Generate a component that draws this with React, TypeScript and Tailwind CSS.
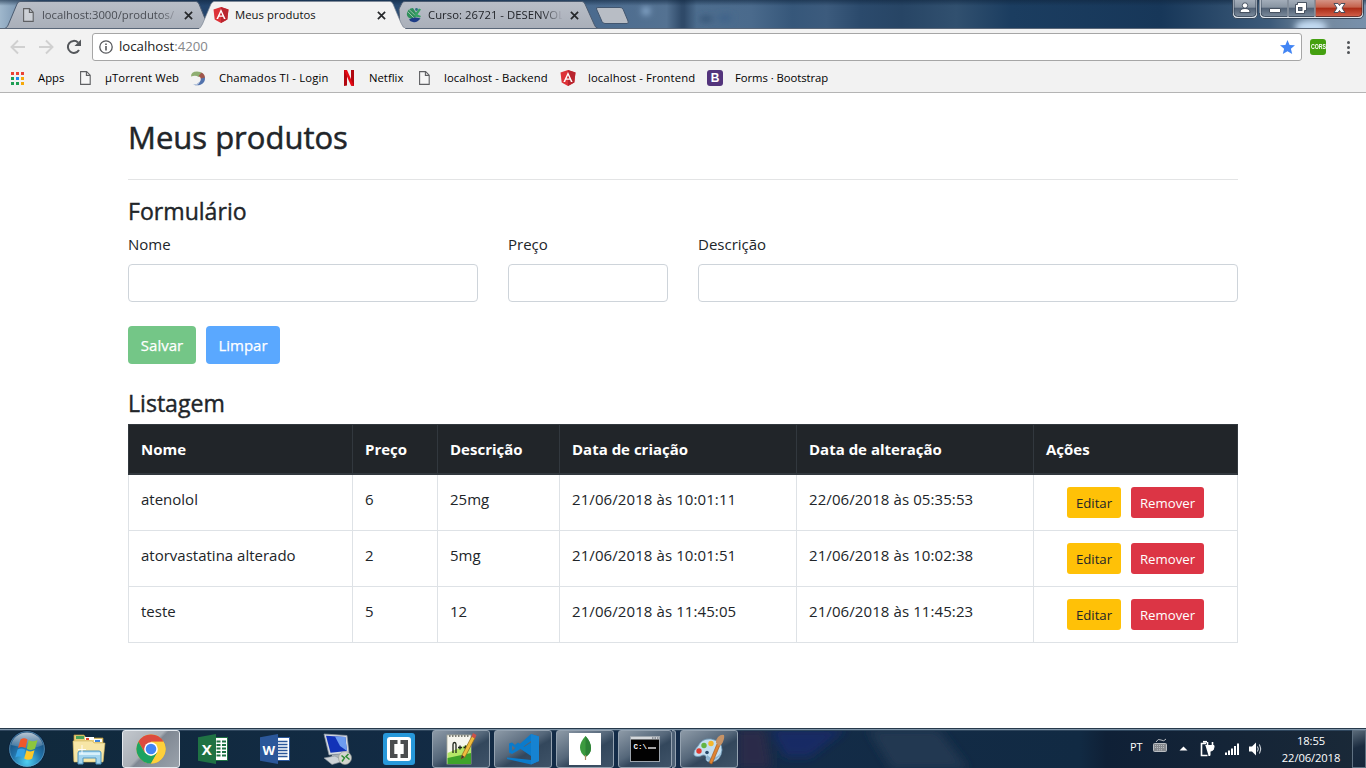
import React from "react";

type Product = { name: string; price: string; description: string; created: string; updated: string };

const products: Product[] = [
  { name: "atenolol", price: "6", description: "25mg", created: "21/06/2018 às 10:01:11", updated: "22/06/2018 às 05:35:53" },
  { name: "atorvastatina alterado", price: "2", description: "5mg", created: "21/06/2018 às 10:01:51", updated: "21/06/2018 às 10:02:38" },
  { name: "teste", price: "5", description: "12", created: "21/06/2018 às 11:45:05", updated: "21/06/2018 às 11:45:23" },
];

/* ---------- icons ---------- */

function FileIcon() {
  return (
    <svg width="11" height="14" viewBox="0 0 11 14" className="block shrink-0" fill="none" stroke="#5f6063" strokeWidth="1.1">
      <path d="M.6 .6H6.6L10.2 4.2V13.4H.6Z" fill="#fff" fillOpacity=".35" />
      <path d="M6.4 .8V4.4H10" />
    </svg>
  );
}

function AngularIcon() {
  return (
    <svg width="16" height="16" viewBox="0 0 16 16" className="block shrink-0">
      <path d="M8 0L15.5 2.6L14.3 12.5L8 16L1.7 12.5L.5 2.6Z" fill="#dd3238" />
      <path d="M8 0L15.5 2.6L14.3 12.5L8 16Z" fill="#b9252f" />
      <path d="M8 2L3.4 12.1H5.1L6 9.8H10L10.9 12.1H12.6ZM8 5.2L9.4 8.4H6.6Z" fill="#fff" fillRule="evenodd" />
    </svg>
  );
}

function CloseIcon() {
  return (
    <svg width="9" height="9" viewBox="0 0 9 9" className="block">
      <path d="M.9 .9L8.1 8.1M8.1 .9L.9 8.1" stroke="#26282b" strokeWidth="1.7" />
    </svg>
  );
}

function CourseIcon() {
  return (
    <svg width="16" height="16" viewBox="0 0 16 16" className="block shrink-0">
      <path d="M.8 7Q1.500 1.500 7 1L12 9L6 12Q.800 11 .800 7Z" fill="#2f8f5b" />
      <path d="M2.500 2L12 11M1.500 4.500L9 12" stroke="#a9c3b6" strokeWidth=".9" />
      <path d="M8.500 7.500L13 1.500L15 2.500L11.500 7.500L15 9L14 10.500L9 9.500Z" fill="#36a263" />
      <path d="M3 12.500Q8 9 14.500 11.500Q11 16 7 15Q4 14.500 3 12.500Z" fill="#1d3c86" />
      <circle cx="10.500" cy="2.500" r="1.400" fill="#2c6f83" />
    </svg>
  );
}

function SwirlIcon() {
  return (
    <svg width="15" height="15" viewBox="0 0 15 15" className="block shrink-0">
      <path d="M0 5.500Q0 .500 6 .500Q10 .500 11.500 2.500L7.500 6Q5 4 0 5.500Z" fill="#8fae72" />
      <path d="M10.500 1.500Q14 3 14 7L10 8.500Q10 6 7.500 5Z" fill="#a0564b" />
      <path d="M14 6.500Q14.500 12 9 14Q6 14.800 3 13.800Q9.500 13 10 7.500Z" fill="#5373ad" />
      <path d="M1.500 13Q6 14 8.500 10.500Q8 14.500 4 14.200Z" fill="#b9c7de" />
    </svg>
  );
}

/* ---------- browser chrome ---------- */

function TabStrip() {
  return (
    <div className="relative h-[29px] w-full shrink-0 overflow-hidden">
      <svg width="1366" height="29" viewBox="0 0 1366 29" className="absolute inset-0">
        <defs>
          <linearGradient id="aero" x1="0" x2="1366" gradientUnits="userSpaceOnUse">
            <stop offset="0" stopColor="#9fb7cc" />
            <stop offset=".012" stopColor="#7f9ab5" />
            <stop offset=".03" stopColor="#44648a" />
            <stop offset=".15" stopColor="#24456c" />
            <stop offset=".32" stopColor="#2b4d74" />
            <stop offset=".43" stopColor="#4a6a8e" />
            <stop offset=".488" stopColor="#547292" />
            <stop offset=".499" stopColor="#2f4a69" />
            <stop offset=".501" stopColor="#2f4a69" />
            <stop offset=".51" stopColor="#4d6d8e" />
            <stop offset=".55" stopColor="#4a6a8c" />
            <stop offset=".58" stopColor="#36577a" />
            <stop offset=".605" stopColor="#3c5b7d" />
            <stop offset=".63" stopColor="#2b4a6c" />
            <stop offset=".66" stopColor="#274565" />
            <stop offset=".7" stopColor="#31506f" />
            <stop offset=".74" stopColor="#1b3d60" />
            <stop offset=".85" stopColor="#173759" />
            <stop offset=".93" stopColor="#3d5b7a" />
            <stop offset=".965" stopColor="#74899e" />
            <stop offset="1" stopColor="#7890ab" />
          </linearGradient>
          <linearGradient id="tabfill" x1="0" x2="0" y1="0" y2="1">
            <stop offset="0" stopColor="#b9bec7" />
            <stop offset="1" stopColor="#a9afb9" />
          </linearGradient>
          <linearGradient id="topshade" x1="0" x2="0" y1="0" y2="1">
            <stop offset="0" stopColor="#10263f" stopOpacity=".6" />
            <stop offset=".2" stopColor="#10263f" stopOpacity="0" />
          </linearGradient>
          <filter id="blur" x="-50%" y="-100%" width="200%" height="300%"><feGaussianBlur stdDeviation="3" /></filter>
        </defs>
        <rect width="1366" height="29" fill="url(#aero)" />
        <g filter="url(#blur)">
          <circle cx="646" cy="11" r="4" fill="#8fb0d3" />
          <ellipse cx="706" cy="19" rx="7" ry="3" fill="#345375" />
          <ellipse cx="725" cy="18" rx="8" ry="4" fill="#41638a" />
          <ellipse cx="1311" cy="27" rx="16" ry="7" fill="#c3dbf3" />
        </g>
        <rect width="1366" height="29" fill="url(#topshade)" />
        <path d="M5 28.5Q8 27 9 23L17 4Q18 1.5 20 1.5H196Q198 1.5 199 4L209 28.5Z" fill="url(#tabfill)" stroke="#4b5b70" />
        <path d="M399 9L402 3Q403 1.5 405 1.5H582Q584 1.5 585 4L594 24Q595 27.5 598 28.5H400Z" fill="url(#tabfill)" stroke="#4b5b70" />
        <path d="M596.5 9Q596 7.5 598 7.5H620Q622 7.5 623 9L628 21Q629 23.5 627 23.5H605Q603 23.5 602 21.500Z" fill="#b8bdc5" stroke="#42566f" />
        <path d="M0 28.500H1366" stroke="#5a6778" />
        <path d="M199 29Q201 27 202.500 24L211 4Q212.500 1.500 214 1.500H390Q392 1.500 393 4L401 23Q403 28 406 29Z" fill="#f2f2f2" stroke="#7b8593" strokeWidth=".7" />
        <path d="M199.500 28.700H405" stroke="#f2f2f2" strokeWidth="1.200" />
      </svg>
      <div className="relative flex h-[29px] pt-px font-['Open_Sans',sans-serif] text-[11.3px] text-[#33363b]">
        <div className="flex h-full w-[213px] items-center pl-[23px]">
          <FileIcon />
          <span className="ml-2 w-[134px] overflow-hidden whitespace-nowrap text-[#4a4e55] tracking-[-0.03px] [mask-image:linear-gradient(to_right,black_88%,transparent_103%)]">localhost:3000/produtos/</span>
          <span className="ml-2"><CloseIcon /></span>
        </div>
        <div className="flex h-full w-[192px] items-center text-[#111]">
          <AngularIcon />
          <span className="ml-1.5 w-[142px] whitespace-nowrap tracking-[0.05px]">Meus produtos</span>
          <CloseIcon />
        </div>
        <div className="flex h-full w-[190px] items-center pl-px">
          <CourseIcon />
          <span className="ml-1.5 w-[134px] overflow-hidden whitespace-nowrap text-[#22252a] tracking-[0.03px] [mask-image:linear-gradient(to_right,black_85%,transparent_101%)]">Curso: 26721 - DESENVOL</span>
          <span className="ml-2"><CloseIcon /></span>
        </div>
      </div>
      <svg width="134" height="20" viewBox="0 0 134 20" className="absolute right-0 top-0">
        <defs>
          <linearGradient id="glass" x1="0" x2="0" y1="0" y2="1">
            <stop offset="0" stopColor="#a7b1bd" />
            <stop offset=".48" stopColor="#8793a1" />
            <stop offset=".5" stopColor="#4f5f73" />
            <stop offset="1" stopColor="#7b8a9b" />
          </linearGradient>
          <linearGradient id="red" x1="0" x2="0" y1="0" y2="1">
            <stop offset="0" stopColor="#d79a8c" />
            <stop offset=".48" stopColor="#c4604a" />
            <stop offset=".5" stopColor="#a92913" />
            <stop offset="1" stopColor="#d2604a" />
          </linearGradient>
        </defs>
        <path d="M.5 -1V13Q.5 18.500 5 18.500H21Q25.500 18.500 25.500 13V-1Z" fill="#e2e8ee" stroke="#35465a" />
        <path d="M2 -1V12.500Q2 16.500 5.500 16.500H20.500Q24 16.500 24 12.500V-1Z" fill="url(#glass)" stroke="#2c3b4e" strokeWidth=".8" />
        <path d="M27.500 -1V13Q27.500 18.500 32 18.500H127Q131.500 18.500 131.500 13V-1Z" fill="#e2e8ee" stroke="#35465a" />
        <path d="M29 -1V12.500Q29 16.500 32.500 16.500H55.500V-1Z" fill="url(#glass)" stroke="#2c3b4e" strokeWidth=".8" />
        <path d="M56.500 -1V16.500H82.500V-1Z" fill="url(#glass)" stroke="#2c3b4e" strokeWidth=".8" />
        <path d="M83.500 -1V16.500H126.500Q130 16.500 130 12.500V-1Z" fill="url(#red)" stroke="#4a1a16" strokeWidth=".8" />
        <path d="M28 0V13M56 0V17M83 0V17" stroke="#dfe5eb" strokeWidth=".8" />
        <g fill="#fff" stroke="#3b4656" strokeWidth=".9">
          <circle cx="13" cy="5.500" r="2.700" />
          <path d="M8 12.500Q8 8.500 13 8.500T18 12.500Z" />
          <rect x="37.500" y="8.500" width="11" height="4" rx=".5" />
          <path d="M65.500 2.500H74.500V10.500H72.500V13.500H63.500V4.500H65.500Z" />
          <rect x="66.500" y="7.500" width="3.500" height="3" fill="#697789" />
          <path d="M102 3.500H106L107.500 5.500L109 3.500H113L110 8L113 12.500H109L107.500 10.500L106 12.500H102L105 8Z" />
        </g>
      </svg>
    </div>
  );
}

function Toolbar() {
  return (
    <div className="flex h-[35px] shrink-0 items-center bg-[#f2f2f2] pb-[3px] pt-1">
      <svg width="84" height="28" viewBox="0 0 84 28" className="ml-2 block shrink-0" fill="none">
        <g stroke="#d0d0d0" strokeWidth="1.900">
          <path d="M17 14H4M10 7.500L3.500 14L10 20.500" />
          <path d="M31 14H44M38 7.500L44.500 14L38 20.500" />
        </g>
        <path d="M71 17A6 6 0 1 1 70 9.500" stroke="#54575b" strokeWidth="2" />
        <path d="M73 6.500V13H66.500Z" fill="#54575b" />
      </svg>
      <div className="flex h-7 w-[1210px] items-center rounded-[3px] border border-[#a6a6a6] bg-white pl-1.5 pr-1.5">
        <svg width="14" height="14" viewBox="0 0 14 14" fill="none" stroke="#57595d" strokeWidth="1.300">
          <circle cx="7" cy="7" r="6.200" />
          <path d="M7 6V10.600M7 3.400V5" strokeWidth="1.600" />
        </svg>
        <span className="ml-[6px] flex-1 font-['Open_Sans',sans-serif] text-[13.2px] text-[#1a1a1a]">
          localhost<span className="text-[#85878a]">:4200</span>
        </span>
        <svg width="15" height="14" viewBox="0 0 15 14">
          <path d="M7.500 0L9.600 4.900L15 5.300L10.900 8.800L12.200 14L7.500 11.200L2.800 14L4.100 8.800L0 5.300L5.400 4.900Z" fill="#4285f4" />
        </svg>
      </div>
      <div className="ml-2 flex h-4 w-4 items-center justify-center rounded-[3px] bg-[#44a010]">
        <span className="scale-x-[.8] font-['Liberation_Sans',sans-serif] text-[6.500px] font-bold text-white">CORS</span>
      </div>
      <div className="ml-[21px] flex flex-col gap-0.5">
        <i className="block h-[3px] w-[3px] rounded-full bg-[#505357]" />
        <i className="block h-[3px] w-[3px] rounded-full bg-[#505357]" />
        <i className="block h-[3px] w-[3px] rounded-full bg-[#505357]" />
      </div>
    </div>
  );
}

function Bookmarks() {
  return (
    <div className="flex h-[29px] shrink-0 items-center whitespace-nowrap border-b border-[#b4b4b4] bg-[#f2f2f2] pl-[11px] font-['Open_Sans',sans-serif] text-[11.3px] text-black">
      <svg width="13" height="13" viewBox="0 0 13 13" className="shrink-0">
        <path d="M0 0H3V3H0ZM5 0H8V3H5ZM10 0H13V3H10Z" fill="#ea4335" />
        <path d="M0 5H3V8H0ZM0 10H3V13H0ZM5 10H8V13H5Z" fill="#1e9e54" />
        <path d="M5 5H8V8H5Z" fill="#1a8cf0" />
        <path d="M10 5H13V8H10ZM10 10H13V13H10Z" fill="#f5a90a" />
      </svg>
      <span className="ml-[14px] w-[42px]">Apps</span>
      <FileIcon />
      <span className="ml-[14px] w-[86px] tracking-[0.08px]">µTorrent Web</span>
      <SwirlIcon />
      <span className="ml-[13px] w-[125px] tracking-[0.16px]">Chamados TI - Login</span>
      <svg width="10" height="16" viewBox="0 0 10 16" className="shrink-0">
        <path d="M0 0H3V15.500L0 16ZM7 0H10V16L7 15.500Z" fill="#b1060f" />
        <path d="M0 0H3L10 16L7 15.500Z" fill="#e50914" />
      </svg>
      <span className="ml-[15px] w-[50px]">Netflix</span>
      <FileIcon />
      <span className="ml-[14px] w-[116px] tracking-[0.1px]">localhost - Backend</span>
      <AngularIcon />
      <span className="ml-3 w-[119px] tracking-[0.1px]">localhost - Frontend</span>
      <span className="flex h-4 w-4 items-center justify-center rounded-[3px] bg-[#53347c] font-['Liberation_Sans',sans-serif] text-[12px] font-bold text-white">B</span>
      <span className="ml-3 tracking-[-0.05px]">Forms · Bootstrap</span>
    </div>
  );
}

/* ---------- page ---------- */

function Field({ label, className }: { label: string; className: string }) {
  return (
    <label className={className}>
      <span className="mb-2 block h-6 leading-6">{label}</span>
      <input className="block h-[38px] w-full rounded border border-[#ced4da] bg-white px-3 outline-none" />
    </label>
  );
}

function Page() {
  const th = "h-[51px] border-b-2 border-r border-t border-[#32383e] px-3 text-left font-bold";
  const td = "h-14 border-b border-r border-[#dee2e6] px-3 pt-3 align-top leading-6";
  const h4 = "mb-[7px] h-[29px] text-[23.1px] font-normal leading-[30px] [-webkit-text-stroke:0.4px_#212529]";
  return (
    <main className="mx-auto h-[635px] w-[1110px] shrink-0 pt-[25px] font-['Open_Sans',sans-serif] text-[15px] text-[#212529]">
      <h2 className="h-[38px] text-[31px] font-normal leading-[39px] [-webkit-text-stroke:0.5px_#212529]">Meus produtos</h2>
      <hr className="mb-4 mt-[23px] border-[#e3e4e5]" />
      <h4 className={h4}>Formulário</h4>
      <form className="flex gap-[30px]">
        <Field label="Nome" className="block w-[350px]" />
        <Field label="Preço" className="block w-40" />
        <Field label="Descrição" className="block w-[540px]" />
      </form>
      <div className="mt-6 flex gap-2.5 text-white [-webkit-text-stroke:0.25px_#fff]">
        <button className="h-[38px] w-[68px] rounded bg-[#74c687]">Salvar</button>
        <button className="h-[38px] w-[74px] rounded bg-[#5aa8ff]">Limpar</button>
      </div>
      <h4 className={h4 + " mt-6"}>Listagem</h4>
      <table className="w-full table-fixed border-separate border-spacing-0">
        <colgroup>
          <col className="w-[225px]" />
          <col className="w-[85px]" />
          <col className="w-[122px]" />
          <col className="w-[237px]" />
          <col className="w-[237px]" />
          <col className="w-[204px]" />
        </colgroup>
        <thead className="bg-[#212529] text-white">
          <tr>
            <th className={th + " border-l"}>Nome</th>
            <th className={th}>Preço</th>
            <th className={th}>Descrição</th>
            <th className={th}>Data de criação</th>
            <th className={th}>Data de alteração</th>
            <th className={th}>Ações</th>
          </tr>
        </thead>
        <tbody>
          {products.map((p) => (
            <tr key={p.name}>
              <td className={td + " border-l"}>{p.name}</td>
              <td className={td}>{p.price}</td>
              <td className={td}>{p.description}</td>
              <td className={td + " tracking-[0.09px]"}>{p.created}</td>
              <td className={td + " tracking-[0.09px]"}>{p.updated}</td>
              <td className={td}>
                <div className="flex justify-center gap-2.5 text-[13.2px]">
                  <button className="h-[31px] w-[54px] rounded-[3px] bg-[#ffc107]">Editar</button>
                  <button className="h-[31px] w-[73px] rounded-[3px] bg-[#dc3545] text-white">Remover</button>
                </div>
              </td>
            </tr>
          ))}
        </tbody>
      </table>
    </main>
  );
}

/* ---------- taskbar ---------- */

function Slot({ children, active, open, stacked }: { children: React.ReactNode; active?: boolean; open?: boolean; stacked?: boolean }) {
  const frame = active
    ? "border-[#e4e9ee] bg-[linear-gradient(135deg,#c3c8ce_0%,#a9afb6_45%,#7f8893_50%,#9aa2ab_100%)]"
    : open
      ? "border-[#94a2b0] bg-[linear-gradient(150deg,#8d9aa7_0%,#55677a_45%,#33475c_60%,#3f5368_100%)]"
      : "border-transparent";
  return (
    <div className="flex h-full w-[62px] shrink-0 items-center justify-center">
      <div className={"flex h-[38px] items-center justify-center rounded-[3px] border " + frame + (stacked ? " w-[54px]" : " w-[58px]")}>{children}</div>
      {stacked && <div className="h-[38px] w-1 rounded-r-[3px] border-y border-r border-[#94a2b0] bg-[#4f6276]" />}
    </div>
  );
}

function StartOrb() {
  return (
    <svg width="40" height="38" viewBox="0 0 40 38" className="block">
      <defs>
        <radialGradient id="orb" cx=".5" cy=".85" r=".9">
          <stop offset="0" stopColor="#4fd0f2" />
          <stop offset=".45" stopColor="#2272a9" />
          <stop offset="1" stopColor="#12375f" />
        </radialGradient>
        <linearGradient id="orbshine" x1="0" x2="0" y1="0" y2="1">
          <stop offset="0" stopColor="#fff" stopOpacity=".7" />
          <stop offset="1" stopColor="#fff" stopOpacity=".1" />
        </linearGradient>
      </defs>
      <circle cx="20" cy="19" r="18.300" fill="url(#orb)" stroke="#0b2038" />
      <circle cx="20" cy="19" r="17.400" fill="none" stroke="#7fb6d4" strokeOpacity=".6" strokeWidth=".8" />
      <path d="M4 15A16.500 16.500 0 0 1 36 15Q28 19 20 18T4 15Z" fill="url(#orbshine)" />
      <path d="M13.500 9.500Q17 7 20.500 9.500L18.500 18Q15 16 11 18Z" fill="#f0582b" />
      <path d="M21.800 10Q25.500 12.500 30.500 10L28 18.800Q24 21 19.800 18.700Z" fill="#8cc63e" />
      <path d="M10.600 19.500Q14.500 17.500 18.200 19.700L16 28Q12.500 25.500 8.300 27.500Z" fill="#35a3e5" />
      <path d="M19.500 20.200Q23.500 22.500 27.500 20.300L25.200 28.500Q21 31 17.200 28.500Z" fill="#fdc829" />
    </svg>
  );
}

function ExplorerIcon() {
  return (
    <svg width="34" height="32" viewBox="0 0 34 32">
      <path d="M2 2H12L14 5H31V28H2Z" fill="#e9cf7b" stroke="#b9963c" strokeWidth=".7" />
      <rect x="4" y="3" width="8" height="3" fill="#4aa35a" />
      <rect x="13" y="4" width="9" height="3" fill="#fff" />
      <rect x="14" y="5" width="3" height="2" fill="#e0452d" />
      <rect x="22" y="6" width="8" height="3" fill="#fff" />
      <rect x="23" y="7" width="5" height="2" fill="#3f83d8" />
      <path d="M1 8H20L22 10H33L31 29H2Z" fill="#f7e6a6" stroke="#d2b763" strokeWidth=".6" />
      <path d="M6 31V20Q6 18 8 18H27Q29 18 29 20V31H24V25H11V31Z" fill="#a4d5ee" stroke="#4f95c1" />
      <path d="M7 19.500H28V22H7Z" fill="#d8f0fb" />
      <path d="M10 12V21M6 16.500H14" stroke="#fff" strokeWidth=".9" />
    </svg>
  );
}

function ChromeIcon() {
  return (
    <svg width="30" height="30" viewBox="0 0 30 30">
      <circle cx="15" cy="15" r="14.500" fill="#fbc116" />
      <path d="M2.440 7.750A14.500 14.500 0 0 1 27.560 7.750L15 7.750L8.720 18.600Z" fill="#dd4b3e" />
      <path d="M2.440 7.750A14.500 14.500 0 0 0 15 29.500L21.300 18.600L15 22L8.700 18.600Z" fill="#1da362" />
      <path d="M27.560 7.750H15L21.300 18.600L15 29.500A14.500 14.500 0 0 0 27.560 7.750Z" fill="#fdd03b" />
      <circle cx="15" cy="15" r="6.800" fill="#fff" />
      <circle cx="15" cy="15" r="5.300" fill="#4285f4" />
    </svg>
  );
}

function OfficeIcon({ letter }: { letter: "X" | "W" }) {
  const excel = letter === "X";
  const color = excel ? "#1f7244" : "#2b579a";
  return (
    <svg width="30" height="30" viewBox="0 0 30 30">
      <rect x="17" y="3.500" width="12.500" height="23" fill="#fff" stroke={color} />
      {excel ? (
        <path d="M18.500 7.500H22.500M24 7.500H28M18.500 11H22.500M24 11H28M18.500 14.500H22.500M24 14.500H28M18.500 18H22.500M24 18H28M18.500 21.500H22.500M24 21.500H28" stroke={color} strokeWidth="2.200" />
      ) : (
        <path d="M18 7.500H27.500M18 10.500H27.500M18 13.500H27.500M18 16.500H27.500M18 19.500H27.500M18 22.500H27.500" stroke={color} strokeWidth="1.300" />
      )}
      <path d="M0 3.300L18 0V30L0 26.700Z" fill={color} />
      <text x="8.700" y="20.500" textAnchor="middle" fontFamily="Open Sans" fontWeight="700" fontSize={excel ? 15 : 13} fill="#fff">{letter}</text>
    </svg>
  );
}

function RemoteIcon() {
  return (
    <svg width="32" height="32" viewBox="0 0 32 32">
      <path d="M3 1L26 2.500L28 20L8 22Z" fill="#d5dae0" stroke="#8a94a0" strokeWidth=".7" />
      <path d="M5 2.800L24.300 4L26 18L9.500 19.800Z" fill="#1233b8" />
      <path d="M14 3.400L24.300 4L26 18L19 13Z" fill="#6d9cf0" />
      <path d="M11 22L19 21V26L10 26Z" fill="#aab1b9" />
      <path d="M3 25L14 23L23 28L11 31.500Z" fill="#cdd2d7" stroke="#8b939c" strokeWidth=".6" />
      <circle cx="24" cy="25" r="6.500" fill="#d4d5cf" stroke="#8f948f" strokeWidth=".6" />
      <path d="M20.500 22.500L23.500 25L21 28.500M27.500 21L25 23.500L28.500 26.500" fill="none" stroke="#2f8b35" strokeWidth="1.500" />
    </svg>
  );
}

function BracketsIcon() {
  return (
    <svg width="32" height="32" viewBox="0 0 32 32">
      <rect width="32" height="32" rx="3" fill="#2798da" />
      <rect x="4" y="4" width="24" height="24" rx="3" fill="#fff" />
      <path d="M7 7H14.500V11H11.300V21H14.500V25H7ZM25 7H17.500V11H20.700V21H17.500V25H25Z" fill="#4b4d4f" />
    </svg>
  );
}

function NotepadIcon() {
  return (
    <svg width="32" height="32" viewBox="0 0 32 32">
      <rect x="2" y="2" width="24" height="29" fill="#f6f6ee" stroke="#a7a899" strokeWidth=".8" />
      <path d="M2.500 20L26 10V31H2.500Z" fill="#b5e667" />
      <path d="M2.500 25L26 20V31H2.500Z" fill="#3fa32a" />
      <path d="M4 3H25" stroke="#7b7d74" strokeWidth="2" strokeDasharray="1.500 1.500" />
      <path d="M8 20V11.500Q8 9.500 9.500 9.500T11 11.500V20M13 14.500H17M15 12.500V16.500M18.500 14.500H22.500M20.500 12.500V16.500" fill="none" stroke="#1e251a" strokeWidth="1.300" />
      <path d="M16 26L17 22L27 3L30 5L20 24Z" fill="#f0bb3d" stroke="#8d6418" strokeWidth=".7" />
      <path d="M26.500 3.500L28 0L31.500 2L30 5.500Z" fill="#cc5148" />
      <path d="M16 26L17 22L19.500 24Z" fill="#41372c" />
    </svg>
  );
}

function CodeIcon() {
  return (
    <svg width="34" height="32" viewBox="0 0 34 32">
      <path d="M25 1L33 3.500V28L25 31.500L1 26V24.500L25 27V8L12 17.500L6 21L3 19.500V10.500L6 9.500L11 13.500L25 1ZM25 9.500L15 16L25 22ZM6 12.500V18L9.500 15.300Z" fill="#0b7bcb" fillRule="evenodd" />
      <path d="M9 12L25 23V18.500L12 9.500Z" fill="#0b7bcb" />
      <path d="M25 1L33 3.500V28L25 31.500Z" fill="#1683d2" />
    </svg>
  );
}

function MongoIcon() {
  return (
    <svg width="32" height="32" viewBox="0 0 32 32">
      <rect width="32" height="32" fill="#fff" />
      <path d="M16.500 3Q22 9 22 15T16.500 24Q11 20 11 14.500T16.500 3Z" fill="#3c9a3f" />
      <path d="M16.500 3Q22 9 22 15T16.500 24Z" fill="#2c8135" />
      <path d="M16.500 22V27" stroke="#a9885f" strokeWidth="1.200" />
    </svg>
  );
}

function ConsoleIcon() {
  return (
    <svg width="30" height="26" viewBox="0 0 30 26">
      <rect x=".5" y=".5" width="29" height="25" fill="#020202" stroke="#9da5ad" />
      <path d="M1 1H29V3.500H1Z" fill="#d5d8dc" />
      <path d="M22 2H23.500M24.500 2H26M27 2H28.500" stroke="#4c5560" />
      <text x="3.500" y="12.500" fontFamily="Liberation Mono" fontWeight="700" fontSize="7.500" fill="#fff">C:\</text>
      <path d="M18 12H26" stroke="#fff" strokeWidth="1.300" />
    </svg>
  );
}

function PaintIcon() {
  return (
    <svg width="32" height="32" viewBox="0 0 32 32">
      <path d="M5 13Q9 5 18 6Q29 8 29 17Q28 28 18 29Q13 29 13 26Q14 22 10 22Q4 25 1 22Q0 18 5 13Z" fill="#c4dff0" stroke="#709bb9" strokeWidth=".8" />
      <path d="M14 22Q12 28 18 28Q26 27 28 19Q25 25 18 25Z" fill="#8db5d2" />
      <circle cx="6" cy="18" r="2.700" fill="#df3b31" />
      <circle cx="11" cy="12.500" r="2.700" fill="#63b541" />
      <circle cx="18" cy="10.500" r="2.700" fill="#f3b62d" />
      <circle cx="14" cy="19.500" r="1.800" fill="#27486a" />
      <path d="M24 11L27 12L19 31Q16 31 16.500 29Z" fill="#e08432" stroke="#9b531b" strokeWidth=".6" />
      <path d="M23 10Q23 6 25 4Q28 1 31 2Q32 6 28.500 11.500L26 13Z" fill="#c69367" />
    </svg>
  );
}

function Tray() {
  return (
    <div className="ml-auto flex h-full items-center text-white">
      <span className="-mt-1.5 w-[23px] font-['Open_Sans',sans-serif] text-[11px] leading-none">PT</span>
      <svg width="134" height="38" viewBox="0 0 134 38" className="-mr-4 block">
        <g fill="none" stroke="#b9bdc2">
          <rect x=".500" y="13.500" width="13" height="8" rx="1" fill="#85898e" />
          <path d="M2 15.500H12M2 17.500H12M4 19.800H10" strokeDasharray="1 1" />
          <path d="M3 12Q5 8 8 10T13 9" />
        </g>
        <path d="M26.500 20.500L30.500 16.500L34.500 20.500Z" fill="#fff" />
        <g stroke="#fff" fill="none">
          <path d="M53 13.500H48.500V25.500H54.500" strokeWidth="1.600" />
          <path d="M50 11.800H54" strokeWidth="1.800" />
          <path d="M54.500 12V16M59.500 12V16" strokeWidth="1.600" />
          <path d="M52.500 15.500H61V17Q61 20.500 58 21H57V25.500H55.500" fill="#fff" />
        </g>
        <path d="M72 22.500H74V25H72ZM75 20.500H77V25H75ZM78 18.500H80V25H78ZM81 16H83V25H81ZM84 13.500H86V25H84Z" fill="#fff" />
        <path d="M96 16.500H99L103 12.500V25.500L99 21.500H96Z" fill="#fff" />
        <path d="M104.500 16.500Q106 19 104.500 21.500M106.500 14.500Q109 19 106.500 23.500" stroke="#dfe4e9" fill="none" />
      </svg>
      <div className="flex w-20 flex-col items-center font-['Open_Sans',sans-serif] text-[11.2px] leading-[17px] tracking-[-0.1px]">
        <span>18:55</span>
        <span>22/06/2018</span>
      </div>
      <div className="ml-px h-[38px] w-[14px] border border-[#5f7182] bg-[linear-gradient(160deg,#596978,#1b2c40_45%,#15263a)]" />
    </div>
  );
}

function Taskbar() {
  return (
    <div className="relative h-10 w-full shrink-0 overflow-hidden border-t border-[#27394b] bg-[#112a43]">
      <svg width="1366" height="39" viewBox="0 0 1366 39" className="absolute inset-0">
        <defs>
          <filter id="soft"><feGaussianBlur stdDeviation="5" /></filter>
          <linearGradient id="bar" x1="0" x2="1366" gradientUnits="userSpaceOnUse">
            <stop offset="0" stopColor="#10293c" />
            <stop offset=".5" stopColor="#142c49" />
            <stop offset=".79" stopColor="#112a43" />
            <stop offset=".81" stopColor="#0f2036" />
            <stop offset="1" stopColor="#1a2938" />
          </linearGradient>
        </defs>
        <rect width="1366" height="39" fill="url(#bar)" />
        <g filter="url(#soft)">
          <path d="M738 0H765L772 40H738Z" fill="#2a2b48" />
          <path d="M770 0H846L810 28H785Z" fill="#14296a" opacity=".85" />
          <path d="M868 0H938L968 40H892Z" fill="#243851" />
        </g>
        <path d="M0 .500H1366" stroke="#7f95a9" />
        <path d="M0 1.500H1366" stroke="#2f465d" />
      </svg>
      <div className="relative flex h-full items-center pt-px">
        <div className="flex w-[58px] pl-[7px]"><StartOrb /></div>
        <Slot><ExplorerIcon /></Slot>
        <Slot active><ChromeIcon /></Slot>
        <Slot><OfficeIcon letter="X" /></Slot>
        <Slot><OfficeIcon letter="W" /></Slot>
        <Slot><RemoteIcon /></Slot>
        <Slot><BracketsIcon /></Slot>
        <Slot open><NotepadIcon /></Slot>
        <Slot open><CodeIcon /></Slot>
        <Slot open><MongoIcon /></Slot>
        <Slot open stacked><ConsoleIcon /></Slot>
        <Slot open><PaintIcon /></Slot>
        <Tray />
      </div>
    </div>
  );
}

export default function App() {
  return (
    <div className="flex h-[768px] w-[1366px] flex-col overflow-hidden bg-white">
      <TabStrip />
      <Toolbar />
      <Bookmarks />
      <Page />
      <Taskbar />
    </div>
  );
}
